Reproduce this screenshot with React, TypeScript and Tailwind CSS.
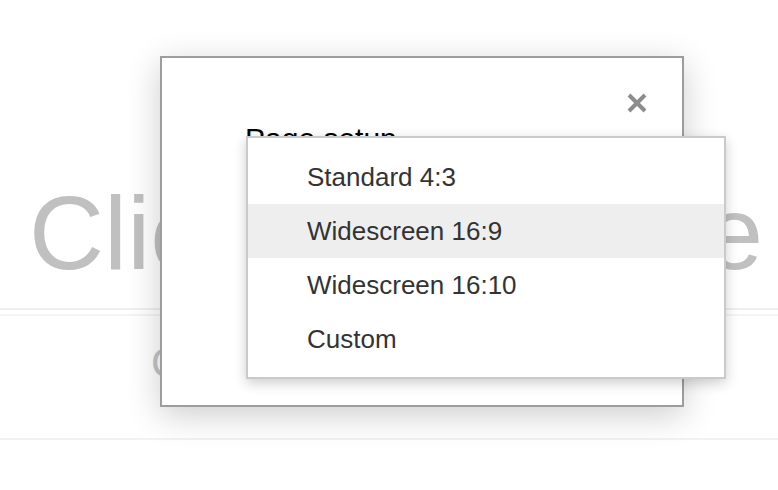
import React from 'react'

const items = ['Standard 4:3', 'Widescreen 16:9', 'Widescreen 16:10', 'Custom']

function CloseIcon() {
  return (
    <svg width="24" height="24" viewBox="0 0 24 24" fill="none">
      <path d="M4 4 L20 20 M20 4 L4 20" stroke="#8c8c8c" strokeWidth="4" strokeLinecap="butt" />
    </svg>
  )
}

function PageSetupDialog() {
  return (
    <div className="absolute left-[160px] top-[56px] w-[524px] h-[351px] bg-white border-2 border-[#9d9d9d] shadow-[0_8px_32px_rgba(0,0,0,0.2)]">
      <button className="absolute left-[463px] top-[33px] w-[24px] h-[24px]" aria-label="Close">
        <CloseIcon />
      </button>
      <div className="pt-[66px] pl-[83px] text-[30px] leading-none text-black">Page setup</div>
    </div>
  )
}

function SizeMenu() {
  return (
    <div className="absolute left-[246px] top-[136px] w-[480px] flex flex-col bg-white border-2 border-[#cacaca] pt-[12px] pb-[11px] shadow-[0_4px_12px_rgba(0,0,0,0.2)]">
      {items.map((label, i) => (
        <div
          key={label}
          className={`h-[54px] flex items-center pl-[59px] text-[26px] text-[#333333] ${i === 1 ? 'bg-[#eeeeee]' : ''}`}
        >
          {label}
        </div>
      ))}
    </div>
  )
}

export default function App() {
  return (
    <div
      className="relative w-[778px] h-[490px] flex flex-col bg-white overflow-hidden"
      style={{ fontFamily: '"Liberation Sans", Arial, sans-serif' }}
    >
      <div className="pt-[181px] pl-[29px] text-[104px] leading-none text-[#c0c0c0] whitespace-nowrap">
        Click to add title
      </div>
      <div className="mt-[23px] h-[2px] bg-[#efefef]" />
      <div className="mt-[4px] h-[2px] bg-[#f4f4f4]" />
      <div className="mt-[26px] pl-[151px] text-[42px] leading-none text-[#c4c4c4] whitespace-nowrap">
        Click to add subtitle
      </div>
      <div className="mt-[54px] h-[2px] bg-[#f2f2f2]" />

      <PageSetupDialog />
      <SizeMenu />
    </div>
  )
}
